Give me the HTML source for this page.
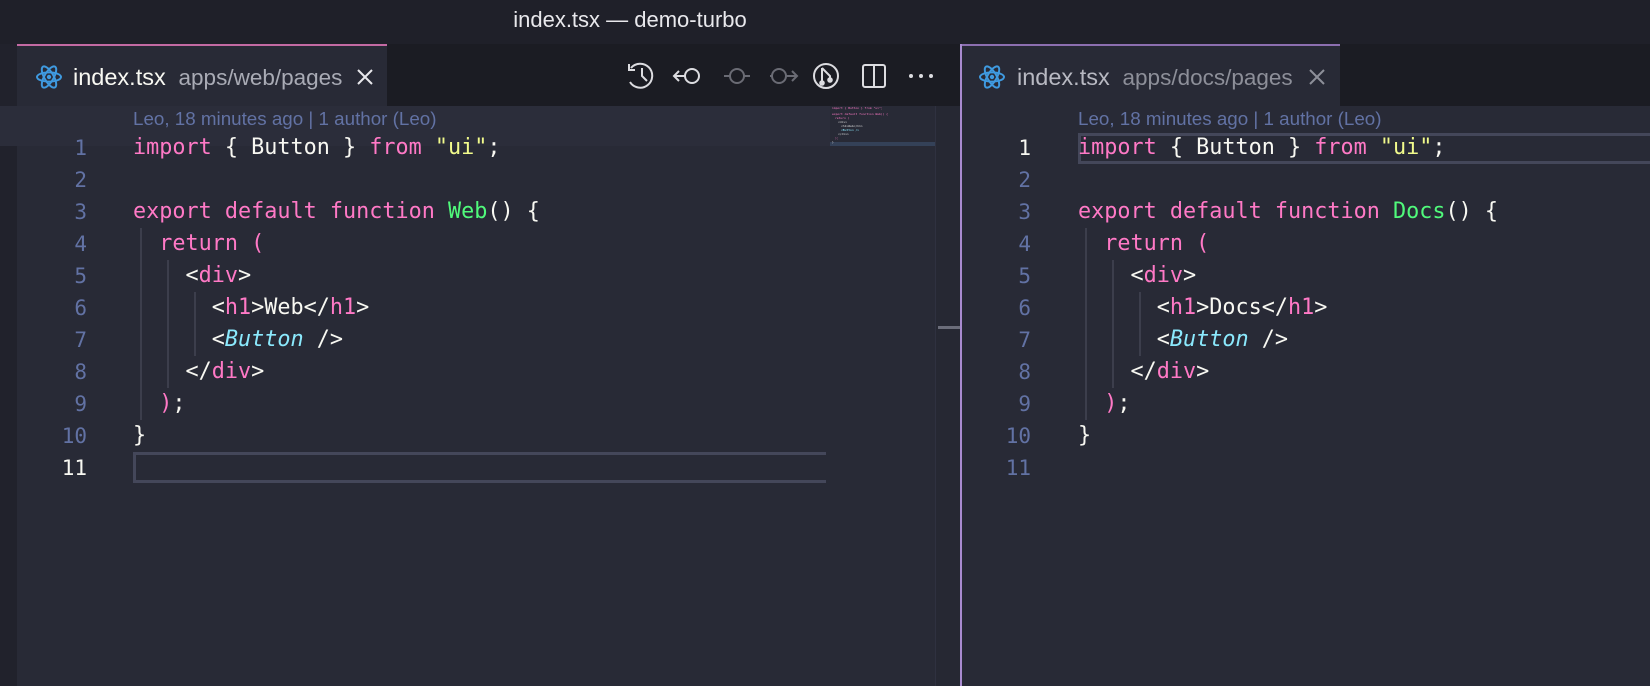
<!DOCTYPE html>
<html><head><meta charset="utf-8"><style>
*{margin:0;padding:0;box-sizing:border-box}
body{width:1650px;height:686px;background:#282a36;overflow:hidden;position:relative;font-family:"Liberation Sans",sans-serif}
.title{position:absolute;left:0;top:0;width:1260px;height:44px;background:#1f2029;color:#e8e8ec;font-size:22px;text-align:center;line-height:40px}
.titlebg{position:absolute;left:0;top:0;width:1650px;height:44px;background:#1f2029}
.side{position:absolute;left:0;top:44px;width:17px;height:642px;background:#21222c}
.tabbar{position:absolute;top:44px;height:62px;background:#1b1c23}
.tab{position:absolute;top:44px;height:62px;background:#282a36;color:#f8f8f2;font-size:23.5px;line-height:62px}
.tab .n{position:absolute;left:56px}
.tab .p{color:#a9abb5;font-size:22.5px}
.code{position:absolute;font-family:"DejaVu Sans Mono","Liberation Mono",monospace;font-size:21.8px;color:#f8f8f2;white-space:pre;line-height:32px}
.ln{position:absolute;font-family:"DejaVu Sans Mono",monospace;font-size:21px;color:#6272a4;text-align:right;line-height:32px;width:60px}
.k{color:#ff79c6}.s{color:#f1fa8c}.f{color:#50fa7b}.c{color:#8be9fd;font-style:italic}
.blame{position:absolute;color:#6272a4;font-size:18.8px;line-height:26px}
.g{position:absolute;width:2px;background:#3c3e4c}
</style></head><body>
<div class="titlebg"></div>
<div class="title">index.tsx — demo-turbo</div>
<div class="side"></div>
<div class="tabbar" style="left:17px;width:943px"></div>
<div class="tabbar" style="left:961px;width:689px"></div>
<div style="position:absolute;left:0;top:106px;width:830px;height:40px;background:#2b2d3a"></div>

<div class="tab" style="left:17px;width:370px;border-top:2px solid #c36aa3">
<svg style="position:absolute;left:18px;top:18px" width="28" height="26" viewBox="-14 -13 28 26" fill="none" stroke="#3f9ae0" stroke-width="2"><ellipse rx="12" ry="4.6"/><ellipse rx="12" ry="4.6" transform="rotate(60)"/><ellipse rx="12" ry="4.6" transform="rotate(120)"/><circle r="2.2" fill="#3f9ae0" stroke="none"/></svg>
<span class="n">index.tsx <span class="p">&nbsp;apps/web/pages</span></span>
<svg style="position:absolute;left:339px;top:22px" width="18" height="18" viewBox="0 0 18 18" stroke="#e8e8ec" stroke-width="2"><path d="M2 2L16 16M16 2L2 16"/></svg>
</div>
<div class="tab" style="left:961px;width:379px;border-top:2px solid #8c6fb0">
<svg style="position:absolute;left:17px;top:18px" width="28" height="26" viewBox="-14 -13 28 26" fill="none" stroke="#3f9ae0" stroke-width="2"><ellipse rx="12" ry="4.6"/><ellipse rx="12" ry="4.6" transform="rotate(60)"/><ellipse rx="12" ry="4.6" transform="rotate(120)"/><circle r="2.2" fill="#3f9ae0" stroke="none"/></svg>
<span class="n" style="color:#b8b9c2">index.tsx <span class="p" style="color:#8d8f99">&nbsp;apps/docs/pages</span></span>
<svg style="position:absolute;left:347px;top:22px" width="18" height="18" viewBox="0 0 18 18" stroke="#8d8f99" stroke-width="2"><path d="M2 2L16 16M16 2L2 16"/></svg>
</div>

<svg style="position:absolute;left:620px;top:58px" width="320" height="36" viewBox="0 0 320 36" fill="none" stroke-width="2">
<g stroke="#dcdce0"><path d="M11 10A12 12 0 1 1 10 24"/><path d="M9 6V12H15"/><path d="M22 10V18L27 23"/></g>
<g stroke="#dcdce0"><circle cx="72" cy="18" r="7"/><path d="M65 18H54M59 13L54 18L59 23"/></g>
<g stroke="#6a6b74"><circle cx="117" cy="18" r="7"/><path d="M104 18H110M124 18H130"/></g>
<g stroke="#6a6b74"><circle cx="159" cy="18" r="7"/><path d="M150 18H152M166 18H177M172 13L177 18L172 23"/></g>
<g stroke="#dcdce0"><circle cx="206" cy="18" r="12"/><path d="M202 10V26M202 10L210 18V22"/><circle cx="202" cy="25" r="1.8" fill="#dcdce0"/><circle cx="210" cy="22" r="1.8" fill="#dcdce0"/></g>
<g stroke="#dcdce0"><rect x="243" y="7" width="22" height="22" rx="2"/><path d="M254 7V29"/></g>
<g fill="#dcdce0" stroke="none"><circle cx="291" cy="18" r="2"/><circle cx="301" cy="18" r="2"/><circle cx="311" cy="18" r="2"/></g>
</svg>

<div style="position:absolute;left:935px;top:106px;width:25px;height:580px;background:#262833;border-left:1px solid #2f3140"></div>
<div style="position:absolute;left:938px;top:326px;width:22px;height:3px;background:#6b6d7a"></div>
<div style="position:absolute;left:830px;top:142px;width:105px;height:4px;background:#344158"></div>
<svg style="position:absolute;left:830px;top:106px" width="100" height="40" font-family="DejaVu Sans Mono" font-size="3">
<text x="2" y="3" fill="#ff79c6">import { Button } from "ui";</text>
<text x="2" y="9" fill="#ff79c6">export default function Web() {</text>
<text x="5" y="13" fill="#ff79c6">return (</text>
<text x="8" y="17" fill="#ddd">&lt;div&gt;</text>
<text x="11" y="21" fill="#ddd">&lt;h1&gt;Web&lt;/h1&gt;</text>
<text x="11" y="25" fill="#8be9fd">&lt;Button /&gt;</text>
<text x="8" y="29" fill="#ddd">&lt;/div&gt;</text>
<text x="5" y="33" fill="#ff79c6">);</text>
<text x="2" y="37" fill="#ddd">}</text>
</svg>
<div style="position:absolute;left:960px;top:44px;width:2px;height:642px;background:#a98bd0"></div>

<div class="blame" style="left:133px;top:106px">Leo, 18 minutes ago | 1 author (Leo)</div>
<div class="ln" style="left:27px;top:132px">1<br>2<br>3<br>4<br>5<br>6<br>7<br>8<br>9<br>10<br><span style="color:#f8f8f2">11</span></div>
<div class="g" style="left:140px;top:228px;height:192px"></div>
<div class="g" style="left:167px;top:260px;height:128px"></div>
<div class="g" style="left:194px;top:292px;height:64px"></div>
<div style="position:absolute;left:133px;top:452px;width:693px;height:31px;border:3px solid #44475a;border-right:none"></div>
<div class="code" style="left:133px;top:132px"><span class="k">import</span> { Button } <span class="k">from</span> <span class="s">"ui"</span>;

<span class="k">export default function</span> <span class="f">Web</span>() {
  <span class="k">return (</span>
    &lt;<span class="k">div</span>&gt;
      &lt;<span class="k">h1</span>&gt;Web&lt;/<span class="k">h1</span>&gt;
      &lt;<span class="c">Button</span> /&gt;
    &lt;/<span class="k">div</span>&gt;
  <span class="k">)</span>;
}
</div>

<div class="blame" style="left:1078px;top:106px">Leo, 18 minutes ago | 1 author (Leo)</div>
<div class="ln" style="left:971px;top:132px"><span style="color:#f8f8f2">1</span><br>2<br>3<br>4<br>5<br>6<br>7<br>8<br>9<br>10<br>11</div>
<div class="g" style="left:1085px;top:228px;height:192px"></div>
<div class="g" style="left:1112px;top:260px;height:128px"></div>
<div class="g" style="left:1139px;top:292px;height:64px"></div>
<div style="position:absolute;left:1078px;top:133px;width:572px;height:31px;border:3px solid #44475a;border-right:none"></div>
<div class="code" style="left:1078px;top:132px"><span class="k">import</span> { Button } <span class="k">from</span> <span class="s">"ui"</span>;

<span class="k">export default function</span> <span class="f">Docs</span>() {
  <span class="k">return (</span>
    &lt;<span class="k">div</span>&gt;
      &lt;<span class="k">h1</span>&gt;Docs&lt;/<span class="k">h1</span>&gt;
      &lt;<span class="c">Button</span> /&gt;
    &lt;/<span class="k">div</span>&gt;
  <span class="k">)</span>;
}
</div>
</body></html>
